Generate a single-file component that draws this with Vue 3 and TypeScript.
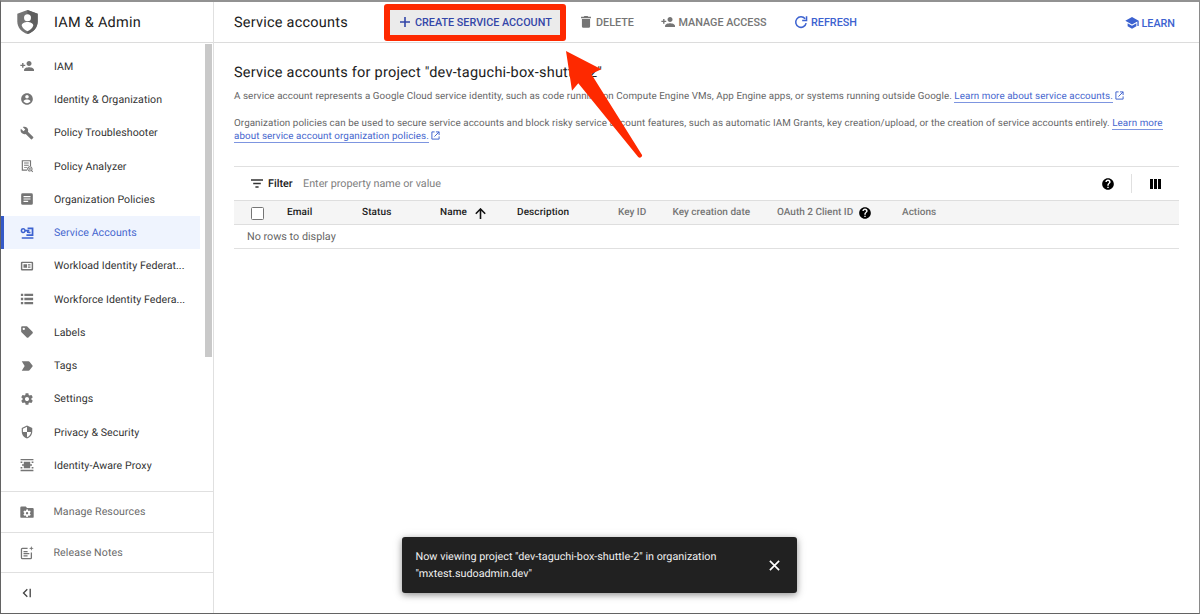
<script setup lang="ts">
interface NavItem {
  label: string
  icon: string
  active?: boolean
}

const icons: Record<string, string> = {
  personAdd:
    'M15.500 12.200c2.400 0 4.300-1.900 4.300-4.300s-1.900-4.300-4.300-4.300-4.300 1.900-4.300 4.300 1.900 4.300 4.300 4.300zM6 9.800V6.800H3.600v3H.6v2.400h3v3H6v-3h3V9.800H6zm9.500 4.200c-2.800 0-8.500 1.400-8.500 4.200v2.300h17v-2.300c0-2.800-5.700-4.200-8.500-4.200z',
  account:
    'M12 2C6.48 2 2 6.48 2 12s4.48 10 10 10 10-4.48 10-10S17.52 2 12 2zm0 3c1.66 0 3 1.34 3 3s-1.34 3-3 3-3-1.34-3-3 1.34-3 3-3zm0 14.2c-2.5 0-4.71-1.28-6-3.22.03-1.99 4-3.08 6-3.08 1.99 0 5.97 1.09 6 3.08-1.29 1.94-3.5 3.22-6 3.22z',
  wrench:
    'M22.7 19l-9.1-9.1c.9-2.3.4-5-1.5-6.9-2-2-5-2.4-7.4-1.3L9 6 6 9 1.6 4.7C.4 7.1.9 10.1 2.9 12.1c1.9 1.9 4.6 2.4 6.9 1.5l9.1 9.1c.4.4 1 .4 1.4 0l2.3-2.3c.5-.4.5-1.1.1-1.4z',
  analyzer:
    'M3 2h16v10h-2V4H5v14h7v2H3V2zm4 4h8v1.6H7V6zm0 4h8v1.6H7V10zm0 4h5v1.6H7V14zm10-1.500a4.500 4.500 0 0 1 3.700 7l1.800 1.800-1.300 1.300-1.900-1.900a4.500 4.500 0 1 1-2.300-8.200zm0 1.700a2.800 2.800 0 1 0 0 5.600 2.800 2.800 0 0 0 0-5.600zm0 1.300a1.500 1.500 0 1 1 0 3 1.500 1.500 0 0 1 0-3z',
  article:
    'M19.500 2h-15A2.500 2.500 0 0 0 2 4.500v15A2.500 2.500 0 0 0 4.500 22h15a2.500 2.500 0 0 0 2.500-2.500v-15A2.500 2.500 0 0 0 19.500 2zM14 17H6v-2h8v2zm4-4H6v-2h12v2zm0-4H6V7h12v2z',
  serviceKey:
    'M5.500 3.500a4.500 4.500 0 0 1 4.200 3H16v3h-1.500V12H12V9.500H9.700A4.500 4.500 0 1 1 5.500 3.500zm0 2.700a1.800 1.800 0 1 0 0 3.600 1.800 1.800 0 0 0 0-3.600zM13 2.500h10v14.500H11v-3h9v-8.500h-7zM14.500 10H18v2.500h-3.500zM3 19.200h20V22H3z',
  badge:
    'M20.500 4.500h-17a2 2 0 0 0-2 2v11a2 2 0 0 0 2 2h17a2 2 0 0 0 2-2v-11a2 2 0 0 0-2-2zm-.5 12.500H4V7h16v10zM6 9h6v6H6zM13.500 9H18v2.300h-4.500zM13.500 12.700H18V15h-4.500z',
  list:
    'M1.500 3h4v4h-4zM7.500 3h15v4h-15zM1.500 10h4v4h-4zM7.500 10h15v4h-15zM1.500 17h4v4h-4zM7.500 17h15v4h-15z',
  label:
    'M21.41 11.58l-9-9C12.05 2.22 11.55 2 11 2H4c-1.1 0-2 .9-2 2v7c0 .55.22 1.05.59 1.42l9 9c.36.36.86.58 1.41.58.55 0 1.050-.22 1.410-.59l7-7c.37-.36.59-.86.59-1.410 0-.55-.23-1.060-.59-1.420zM6.500 8.500a2 2 0 1 1 0-4 2 2 0 0 1 0 4z',
  tag: 'M3 4h11.500c.9 0 1.700.4 2.200 1.100L22 12l-5.300 6.900c-.5.7-1.300 1.100-2.200 1.100H3l5-8z',
  gear:
    'M19.43 12.98c.04-.32.07-.64.07-.98s-.03-.66-.07-.98l2.11-1.65c.19-.15.24-.42.12-.64l-2-3.460c-.12-.22-.39-.3-.61-.22l-2.490 1c-.52-.4-1.080-.73-1.690-.98l-.38-2.650C14.460 2.180 14.250 2 14 2h-4c-.25 0-.46.18-.49.42l-.38 2.650c-.61.25-1.170.59-1.690.98l-2.490-1c-.23-.09-.49 0-.61.22l-2 3.460c-.13.22-.07.49.12.64l2.110 1.650c-.04.32-.07.65-.07.98s.03.66.07.98l-2.110 1.650c-.19.15-.24.42-.12.64l2 3.460c.12.22.39.3.61.22l2.490-1c.52.4 1.080.73 1.690.98l.38 2.650c.03.24.24.42.49.42h4c.25 0 .46-.18.49-.42l.38-2.650c.61-.25 1.170-.59 1.690-.98l2.490 1c.23.09.49 0 .61-.22l2-3.460c.12-.22.07-.49-.12-.64l-2.110-1.650zM12 15.500c-1.930 0-3.500-1.570-3.500-3.500s1.570-3.500 3.500-3.500 3.500 1.570 3.500 3.500-1.570 3.500-3.500 3.500z',
  shield:
    'M12 1L3 5v6c0 5.550 3.840 10.740 9 12 5.160-1.260 9-6.450 9-12V5l-9-4zm0 10.990h7c-.53 4.120-3.280 7.790-7 8.940V12H5V6.300l7-3.110v8.800z',
  proxy:
    'M1 1.500h22V4H1zM1 20h22v2.500H1zM6.500 6.500h11v11h-11zM1 6h3v2.500H1zM1 15.500h3V18H1zM20 6h3v2.500h-3zM20 15.500h3V18h-3zM3.500 10.700h3v2.600h-3zM17.500 10.700h3v2.600h-3z',
}

const navItems: NavItem[] = [
  { label: 'IAM', icon: 'personAdd' },
  { label: 'Identity & Organization', icon: 'account' },
  { label: 'Policy Troubleshooter', icon: 'wrench' },
  { label: 'Policy Analyzer', icon: 'analyzer' },
  { label: 'Organization Policies', icon: 'article' },
  { label: 'Service Accounts', icon: 'serviceKey', active: true },
  { label: 'Workload Identity Federat...', icon: 'badge' },
  { label: 'Workforce Identity Federa...', icon: 'list' },
  { label: 'Labels', icon: 'label' },
  { label: 'Tags', icon: 'tag' },
  { label: 'Settings', icon: 'gear' },
  { label: 'Privacy & Security', icon: 'shield' },
  { label: 'Identity-Aware Proxy', icon: 'proxy' },
]

const helpPath =
  'M12 2C6.480 2 2 6.480 2 12s4.480 10 10 10 10-4.480 10-10S17.520 2 12 2zm1.200 17h-2.400v-2.400h2.400V19zm2.300-8.300l-.9.920c-.9.9-1.300 1.500-1.300 3.180h-2.500v-.6c0-1.100.4-2.100 1.200-2.900l1.240-1.260c.36-.36.56-.86.56-1.340a1.900 1.900 0 0 0-3.800 0H7.500a4.500 4.500 0 0 1 9 0c0 .9-.4 1.500-1 2z'
</script>

<template>
  <div class="console">
    <aside class="sidebar">
      <header class="product">
        <svg class="product-icon" viewBox="0 0 21 24">
          <path d="M10.500 0L.3 3.800v7.400c0 5.900 4 10.900 10.200 12.800 6.200-1.900 10.200-6.900 10.200-12.800V3.800z" fill="#757575" />
          <path d="M10.500 0l10.200 3.800v7.400c0 5.900-4 10.900-10.200 12.800z" fill="#5f5f5f" />
          <circle cx="10.500" cy="7.800" r="3.500" fill="#fff" />
          <path d="M4.700 15.500c0-2.300 3-3.500 5.800-3.500s5.800 1.200 5.800 3.500c-1 2.800-3.100 4.800-5.800 5.800-2.700-1-4.800-3-5.800-5.800z" fill="#fff" />
        </svg>
        <span class="product-name">IAM &amp; Admin</span>
      </header>

      <div class="nav-area">
        <nav class="nav">
          <a v-for="item in navItems" :key="item.label" class="nav-item" :class="{ active: item.active }">
            <svg class="nav-icon" viewBox="0 0 24 24"><path :d="icons[item.icon]" fill-rule="evenodd" /></svg>
            <span>{{ item.label }}</span>
          </a>
        </nav>
        <div class="scroll-thumb"></div>
      </div>

      <a class="foot-item">
        <svg class="nav-icon" viewBox="0 0 24 24">
          <path fill-rule="evenodd" d="M2.500 2.500h7.500l2 2.500h9.500a2 2 0 0 1 2 2V20a2 2 0 0 1-2 2h-19a2 2 0 0 1-2-2V4.500a2 2 0 0 1 2-2zM10.800 7.500l-.4 1.900-1.500.8-1.800-.6-1.300 2.300 1.400 1.300v1.600l-1.400 1.300 1.300 2.300 1.800-.6 1.500.8.4 1.900h2.600l.4-1.900 1.500-.8 1.800.6 1.300-2.300-1.400-1.300v-1.600l1.400-1.300-1.300-2.300-1.800.6-1.500-.8-.4-1.900zm1.300 4.500a2 2 0 1 1 0 4 2 2 0 0 1 0-4z" />
        </svg>
        <span>Manage Resources</span>
      </a>
      <a class="foot-item">
        <svg class="nav-icon" viewBox="0 0 24 24">
          <path d="M13 4H4a1.500 1.500 0 0 0-1.500 1.500V20A1.500 1.500 0 0 0 4 21.500h14a1.500 1.500 0 0 0 1.500-1.500v-9" fill="none" stroke="#757575" stroke-width="2.200" />
          <path d="M6 8.500h7v2H6zM6 12.200h10v2H6zM6 16h7v2H6zM19.500 0l1 3 3 1-3 1-1 3-1-3-3-1 3-1z" />
        </svg>
        <span>Release Notes</span>
      </a>
      <button class="collapse" aria-label="Collapse navigation">
        <svg viewBox="0 0 10 10"><path d="M5.300 1.200L1.500 5l3.800 3.800M8.200.8v8.400" /></svg>
      </button>
    </aside>

    <main class="main">
      <header class="toolbar">
        <h1>Service accounts</h1>
        <button class="create">
          <svg viewBox="0 0 12 12"><path d="M6 1v10M1 6h10" stroke="currentColor" stroke-width="1.600" /></svg>
          <span>CREATE SERVICE ACCOUNT</span>
        </button>
        <button class="action delete">
          <svg viewBox="0 0 24 24"><path d="M5 7h14v12.500a2.500 2.500 0 0 1-2.500 2.500h-9A2.500 2.500 0 0 1 5 19.500zM3.500 3H8l1.200-1.500h5.600L16 3h4.500v2.500h-17z" /></svg>
          <span>DELETE</span>
        </button>
        <button class="action manage">
          <svg viewBox="0 0 24 24"><path :d="icons.personAdd" /></svg>
          <span>MANAGE ACCESS</span>
        </button>
        <button class="action refresh">
          <svg viewBox="0 0 24 24"><path d="M19 6.500A9 9 0 1 0 20.800 14M21.500 2v7.500H14" fill="none" stroke="currentColor" stroke-width="2.600" /></svg>
          <span>REFRESH</span>
        </button>
        <button class="action learn">
          <svg viewBox="0 0 24 24"><path d="M12 1.500L.5 8 12 14.500l9.200-5.200V17h2.300V8zM4.500 12.500V17.500L12 22l7.500-4.500v-5L12 16.800z" /></svg>
          <span>LEARN</span>
        </button>
      </header>

      <section class="content">
        <h2>Service accounts for project "dev-taguchi-box-shuttle-2"</h2>
        <p class="intro">
          A service account represents a Google Cloud service identity, such as code running on Compute Engine VMs, App Engine apps, or systems running outside Google. <a>Learn more about service accounts.</a>
          <svg class="external" viewBox="0 0 10 10"><path d="M4 1H1v8h8V6M5.500 1H9v3.500M9 1L3.800 6.200" /></svg>
        </p>
        <p class="policy">
          Organization policies can be used to secure service accounts and block risky service account features, such as automatic IAM Grants, key creation/upload, or the creation of service accounts entirely. <a>Learn more<br />about service account organization policies.</a>
          <svg class="external" viewBox="0 0 10 10"><path d="M4 1H1v8h8V6M5.500 1H9v3.500M9 1L3.800 6.200" /></svg>
        </p>

        <div class="filter">
          <svg class="filter-icon" viewBox="0 0 12 9"><path d="M0 .9h12M2.200 4.500h7.600M4.400 8.100h3.200" /></svg>
          <strong>Filter</strong>
          <span class="placeholder">Enter property name or value</span>
          <svg class="help" viewBox="0 0 24 24"><path :d="helpPath" /></svg>
          <i class="divider"></i>
          <svg class="columns" viewBox="0 0 11 10"><path d="M0 0h3v10H0zM4 0h3v10H4zM8 0h3v10H8z" /></svg>
        </div>

        <div class="table-head">
          <i class="checkbox"></i>
          <b>Email</b>
          <b>Status</b>
          <b class="sorted">
            Name
            <svg viewBox="0 0 11 11"><path d="M5.500 11V1.200M.8 5.700l4.700-4.700 4.700 4.700" /></svg>
          </b>
          <b>Description</b>
          <span>Key ID</span>
          <span>Key creation date</span>
          <span class="oauth">
            OAuth 2 Client ID
            <svg class="help" viewBox="0 0 24 24"><path :d="helpPath" /></svg>
          </span>
          <span>Actions</span>
        </div>
        <div class="empty">No rows to display</div>
      </section>
    </main>

    <div class="snackbar">
      <p>Now viewing project "dev-taguchi-box-shuttle-2" in organization<br />"mxtest.sudoadmin.dev"</p>
      <svg viewBox="0 0 10 10"><path d="M.8.8l8.400 8.400M9.200.8L.8 9.200" /></svg>
    </div>

    <div class="highlight"></div>
    <svg class="pointer" viewBox="0 0 80 110">
      <path d="M3 3L38.300 21.300 28.300 26 78.400 106a2 2 0 0 1-3.200 3L15.300 35.300 9 42.700z" />
    </svg>
  </div>
</template>

<style>
body {
  margin: 0;
  background: #fff;
}
</style>

<style scoped>
.console {
  position: relative;
  display: flex;
  box-sizing: border-box;
  width: 1200px;
  height: 614px;
  overflow: hidden;
  border: 1px solid #636363;
  border-top: 2px solid #929292;
  border-right: 1px solid #8a8a8a;
  background: #fff;
  color: #333;
  font-family: Roboto, "Liberation Sans", sans-serif;
  font-size: 11px;
  text-rendering: geometricPrecision;
}
h1,
h2,
p {
  margin: 0;
  font-weight: 400;
}
button {
  padding: 0;
  border: 0;
  background: none;
  font: inherit;
}
svg {
  display: block;
  flex: none;
}
.sidebar {
  display: flex;
  flex-direction: column;
  box-sizing: border-box;
  width: 213px;
  flex: none;
  border-right: 1px solid #e0e0e0;
}
.product {
  display: flex;
  align-items: center;
  box-sizing: border-box;
  height: 41px;
  flex: none;
  padding-left: 16px;
  border-bottom: 1px solid #dcdcdc;
}
.product-icon {
  width: 21px;
  height: 24px;
}
.product-name {
  margin-left: 16px;
  color: #212121;
  font-size: 14.500px;
  letter-spacing: 0.25px;
}
.nav-area {
  display: flex;
  justify-content: space-between;
  height: 448px;
  flex: none;
}
.nav {
  width: 199px;
  padding-top: 6.600px;
}
.nav-item {
  display: flex;
  align-items: center;
  height: 33.270px;
  box-sizing: border-box;
  padding-left: 19.300px;
  font-size: 10.600px;
  letter-spacing: 0.07px;
}
.nav-icon {
  width: 14px;
  height: 14px;
  margin-right: 19.700px;
  fill: #757575;
}
.nav-item.active {
  padding-left: 16.300px;
  border-left: 3px solid #3459c8;
  background: #eff4fe;
  color: #4566ce;
}
.active .nav-icon {
  fill: #3c62d0;
}
.scroll-thumb {
  width: 7px;
  height: 313px;
  margin: 1px 1px 0 0;
  background: #c9c9c9;
}
.foot-item {
  display: flex;
  align-items: center;
  box-sizing: border-box;
  height: 40.700px;
  flex: none;
  padding-left: 19.300px;
  border-top: 1px solid #e0e0e0;
  color: #6a6a6a;
  font-size: 10.600px;
  letter-spacing: 0.1px;
}
.foot-item .nav-icon {
  margin-right: 19.200px;
}
.collapse {
  display: flex;
  align-items: center;
  flex: 1;
  padding-left: 21px;
  border-top: 1px solid #e0e0e0;
}
.collapse svg {
  width: 10px;
  height: 10px;
  fill: none;
  stroke: #424242;
  stroke-width: 1.300;
}
.main {
  flex: 1;
  min-width: 0;
}
.toolbar {
  display: flex;
  align-items: center;
  box-sizing: border-box;
  height: 41px;
  padding-left: 20px;
  border-bottom: 1px solid #dcdcdc;
}
h1 {
  width: 156px;
  color: #212121;
  font-size: 14.500px;
  letter-spacing: 0.22px;
}
.create {
  display: flex;
  align-items: center;
  width: 170px;
  height: 25px;
  box-sizing: border-box;
  padding-left: 9px;
  background: #ebebeb;
  color: #3346a8;
  font-weight: 500;
  font-size: 10.800px;
  white-space: nowrap;
}
.create svg {
  width: 12px;
  height: 12px;
  margin-right: 4px;
}
.action {
  display: flex;
  align-items: center;
  color: #757575;
  font-weight: 500;
  font-size: 10.800px;
  white-space: nowrap;
}
.action svg {
  width: 14px;
  height: 14px;
  fill: currentColor;
}
.delete {
  width: 101px;
  padding-left: 19px;
}
.delete svg {
  margin-right: 3px;
}
.manage {
  width: 133px;
}
.manage svg {
  margin-right: 3.500px;
}
.refresh,
.learn {
  color: #3c62d0;
}
.refresh svg {
  margin-right: 3px;
}
.learn {
  margin: 2px 24px 0 auto;
}
.learn svg {
  margin: -1px 2px 0 0;
}
.content {
  padding: 21px 20px 0;
}
h2 {
  height: 19px;
  color: #212121;
  font-size: 14.500px;
  line-height: 18px;
  letter-spacing: 0.23px;
  white-space: nowrap;
}
.intro,
.policy {
  color: #666;
  font-size: 9.800px;
  line-height: 13.300px;
  letter-spacing: 0.078px;
  white-space: nowrap;
}
.intro {
  margin-top: 7.200px;
}
.policy {
  height: 49.500px;
  margin-top: 13.300px;
}
.content a {
  border-bottom: 1px solid #7d95e0;
  color: #4566ce;
}
.external {
  display: inline-block;
  width: 9px;
  height: 9px;
  margin-left: 2.500px;
  vertical-align: -1px;
  fill: none;
  stroke: #4566ce;
  stroke-width: 1.100;
}
.filter {
  display: flex;
  align-items: center;
  box-sizing: border-box;
  width: 945px;
  height: 34px;
  padding: 0 18px 0 17px;
  border-top: 1px solid #e0e0e0;
}
.filter-icon {
  width: 12px;
  height: 9px;
  margin-right: 5px;
  fill: none;
  stroke: #333;
  stroke-width: 1.500;
}
.filter strong {
  width: 35px;
  color: #212121;
  font-weight: 500;
  font-size: 10.800px;
}
.placeholder {
  flex: 1;
  color: #808080;
  font-size: 10.800px;
}
.help {
  width: 14px;
  height: 14px;
  fill: #000;
}
.divider {
  width: 1px;
  height: 19px;
  margin: 0 18px 0 16px;
  background: #e0e0e0;
}
.columns {
  width: 11px;
  height: 10px;
}
.table-head {
  display: grid;
  grid-template-columns: 53px 75px 78px 77px 101px 54.500px 104.500px 125px 1fr;
  align-items: center;
  box-sizing: border-box;
  width: 945px;
  height: 25px;
  border: solid #dedede;
  border-width: 1px 0;
  background: #f5f5f5;
  color: #757575;
  font-size: 10px;
  line-height: 12px;
  letter-spacing: 0.1px;
}
.table-head b,
.table-head span {
  padding-top: 1px;
  font-weight: 500;
}
.table-head b {
  color: #212121;
}
.table-head span {
  letter-spacing: 0;
}
.checkbox {
  box-sizing: border-box;
  width: 13px;
  height: 13px;
  margin: 1px 0 0 16.500px;
  border: 1.500px solid #757575;
  border-radius: 1.500px;
  background: #fff;
}
.sorted,
.oauth {
  display: flex;
  align-items: center;
}
.sorted svg {
  width: 11px;
  height: 11px;
  margin-left: 8px;
  fill: none;
  stroke: #111;
  stroke-width: 1.600;
}
.oauth .help {
  margin: -1px 0 -1px 5px;
}
.empty {
  box-sizing: border-box;
  width: 945px;
  height: 24px;
  padding-left: 13px;
  border-bottom: 1px solid #e0e0e0;
  color: #666;
  font-size: 10.800px;
  line-height: 23px;
}
.snackbar {
  position: absolute;
  left: 401px;
  top: 535px;
  display: flex;
  align-items: center;
  justify-content: space-between;
  box-sizing: border-box;
  width: 395px;
  height: 56px;
  padding: 0 17.500px 0 13.500px;
  border-radius: 3px;
  background: #212121;
  box-shadow: 0 2px 6px rgba(0, 0, 0, 0.35), 0 1px 12px rgba(0, 0, 0, 0.12);
  color: #f0f0f0;
  font-size: 10.800px;
  line-height: 16.500px;
}
.snackbar p {
  padding-top: 1px;
}
.snackbar svg {
  width: 11px;
  height: 11px;
  stroke: #fff;
  stroke-width: 1.500;
}
.highlight {
  position: absolute;
  left: 383px;
  top: 1.500px;
  box-sizing: border-box;
  width: 182px;
  height: 37px;
  border: 6px solid #fe2900;
  border-radius: 3px;
}
.pointer {
  position: absolute;
  left: 562px;
  top: 46px;
  width: 80px;
  height: 110px;
  fill: #fe2900;
}
</style>
